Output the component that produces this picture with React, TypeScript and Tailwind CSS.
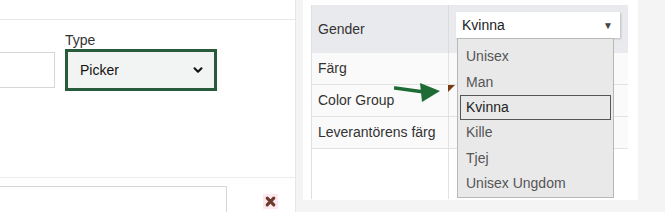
import { ChevronDown } from "lucide-react";

const options = ["Unisex", "Man", "Kvinna", "Kille", "Tjej", "Unisex Ungdom"];

const rows = ["Färg", "Color Group", "Leverantörens färg"];

function LeftPanel() {
  return (
    <div className="relative h-full w-[296px] shrink-0 border-r border-[#e6e6e6] bg-white">
      <div className="h-[20px] border-b border-[#e8e8e8]" />
      <div className="flex h-[158px] items-start gap-[10px] border-b border-[#ececec] pt-[11px]">
        <div className="-ml-[10px] mt-[21px] h-[36px] w-[65px] border border-[#d6d6d6] bg-white" />
        <div className="flex flex-col">
          <span className="h-[18px] text-[14px] leading-[18px] text-[#333]">Type</span>
          <div className="flex h-[42px] w-[152px] items-center justify-between border-[3px] border-[#285b3b] bg-[#f1f4f2] pl-[12px] pr-[9px]">
            <span className="text-[14px] text-[#111]">Picker</span>
            <ChevronDown className="h-[14px] w-[14px] text-[#111]" strokeWidth={3.5} />
          </div>
        </div>
      </div>
      <div className="flex items-center pt-[8px]">
        <div className="-ml-[10px] h-[26px] w-[237px] border border-b-0 border-[#d6d6d6] bg-white" />
        <div className="ml-[36px] mt-[4px] flex h-[15px] w-[15px] items-center justify-center bg-[#fde8f0]">
          <svg viewBox="0 0 10 10" className="h-[11px] w-[11px]">
            <path d="M2 2 L8 8 M8 2 L2 8" stroke="#6b3a2a" strokeWidth="2.8" strokeLinecap="round" />
          </svg>
        </div>
      </div>
    </div>
  );
}

function RightPanel() {
  return (
    <div className="h-full flex-1 bg-[#f4f4f4] pl-[7px]">
      <div className="relative h-[200px] w-[335px] bg-white pl-[8px] pt-[5px]">
        <div className="w-[317px] border-l border-[#e0e0e0] text-[14px] text-[#333]">
          <div className="flex h-[48px] items-center bg-[#e8eaee]">
            <div className="flex h-full w-[137px] items-center border-r border-[#dcdcdc] pl-[6px]">Gender</div>
          </div>
          {rows.map((r) => (
            <div key={r} className="flex h-[32px] items-center border-b border-[#e2e2e2] bg-[#fafafa]">
              <div className="flex h-full w-[137px] items-center border-r border-[#e2e2e2] pl-[6px]">{r}</div>
            </div>
          ))}
          <div className="flex h-[50px]">
            <div className="h-full w-[137px] border-r border-[#e2e2e2]" />
          </div>
        </div>

        {/* select box */}
        <div className="absolute left-[153px] top-[12px] flex h-[26px] w-[164px] items-center justify-between bg-white pl-[6px] pr-[7px] shadow-[1px_1px_2px_rgba(0,0,0,0.2)]">
          <span className="text-[14px] text-[#222]">Kvinna</span>
          <span className="text-[10px] text-[#444]">▼</span>
        </div>

        {/* dropdown list */}
        <div className="absolute left-[154px] top-[38px] flex h-[160px] w-[157px] flex-col border border-[#b8b8b8] bg-[#e9e9e9] pt-[5px] text-[14px] text-[#555]">
          {options.map((o) => (
            <div
              key={o}
              className={
                o === "Kvinna"
                  ? "mx-[2px] flex h-[25px] items-center border border-[#555] pl-[5px] text-[#222]"
                  : "flex h-[25.5px] items-center pl-[8px]"
              }
            >
              {o}
            </div>
          ))}
        </div>

        {/* comment marker */}
        <svg className="absolute left-[145px] top-[85px]" width="7" height="7" viewBox="0 0 7 7">
          <path d="M0 0 L7 0 L0 7 Z" fill="#7a3b12" />
        </svg>

        {/* green arrow */}
        <svg className="absolute left-[91px] top-[82px]" width="48" height="22" viewBox="0 0 48 22">
          <path d="M1 6 L30 10" stroke="#1f6b36" strokeWidth="3.5" strokeLinecap="round" />
          <path d="M26 1 L46 9 L28 20 Z" fill="#1f6b36" />
        </svg>
      </div>
    </div>
  );
}

export default function App() {
  return (
    <div
      className="flex h-[212px] w-[665px] overflow-hidden bg-white"
      style={{ fontFamily: '"Liberation Sans", Arial, sans-serif' }}
    >
      <LeftPanel />
      <RightPanel />
    </div>
  );
}
